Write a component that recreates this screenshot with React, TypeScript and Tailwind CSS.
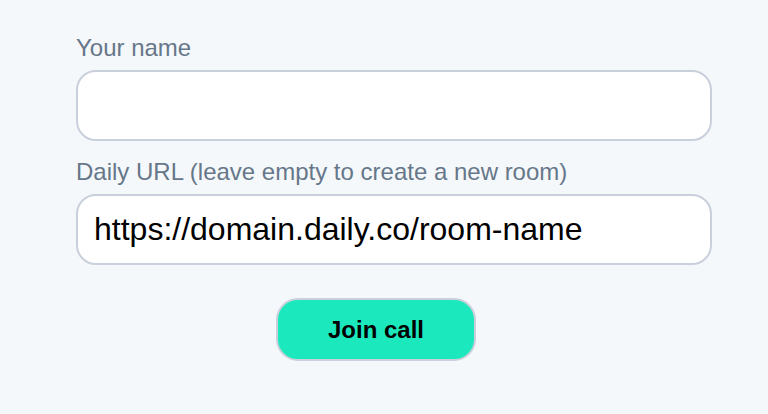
import React from "react";

export default function App() {
  return (
    <div
      className="w-[768px] h-[414px] bg-[#f5f8fa] overflow-hidden"
      style={{ fontFamily: '"Liberation Sans", Arial, sans-serif' }}
    >
      <div className="flex flex-col pl-[76px] pt-[34px] w-[712px]">
        <label className="text-[24px] leading-[28px] text-[#66778a]">Your name</label>
        <input
          className="mt-[8px] h-[71px] w-[636px] rounded-[20px] border-2 border-[#c9d0dc] bg-white px-[16px] text-[32px] text-black outline-none"
          type="text"
        />
        <label className="mt-[17px] text-[24px] leading-[28px] text-[#66778a]">
          Daily URL (leave empty to create a new room)
        </label>
        <input
          className="mt-[8px] h-[71px] w-[636px] rounded-[20px] border-2 border-[#c9d0dc] bg-white px-[16px] text-[32px] text-black outline-none"
          type="text"
          defaultValue="https://domain.daily.co/room-name"
        />
        <div className="mt-[33px] pl-[200px]">
          <button className="h-[63px] w-[200px] rounded-[22px] border-2 border-[#c9d0dc] bg-[#1be9bd] text-[24px] font-bold text-black">
            Join call
          </button>
        </div>
      </div>
    </div>
  );
}
